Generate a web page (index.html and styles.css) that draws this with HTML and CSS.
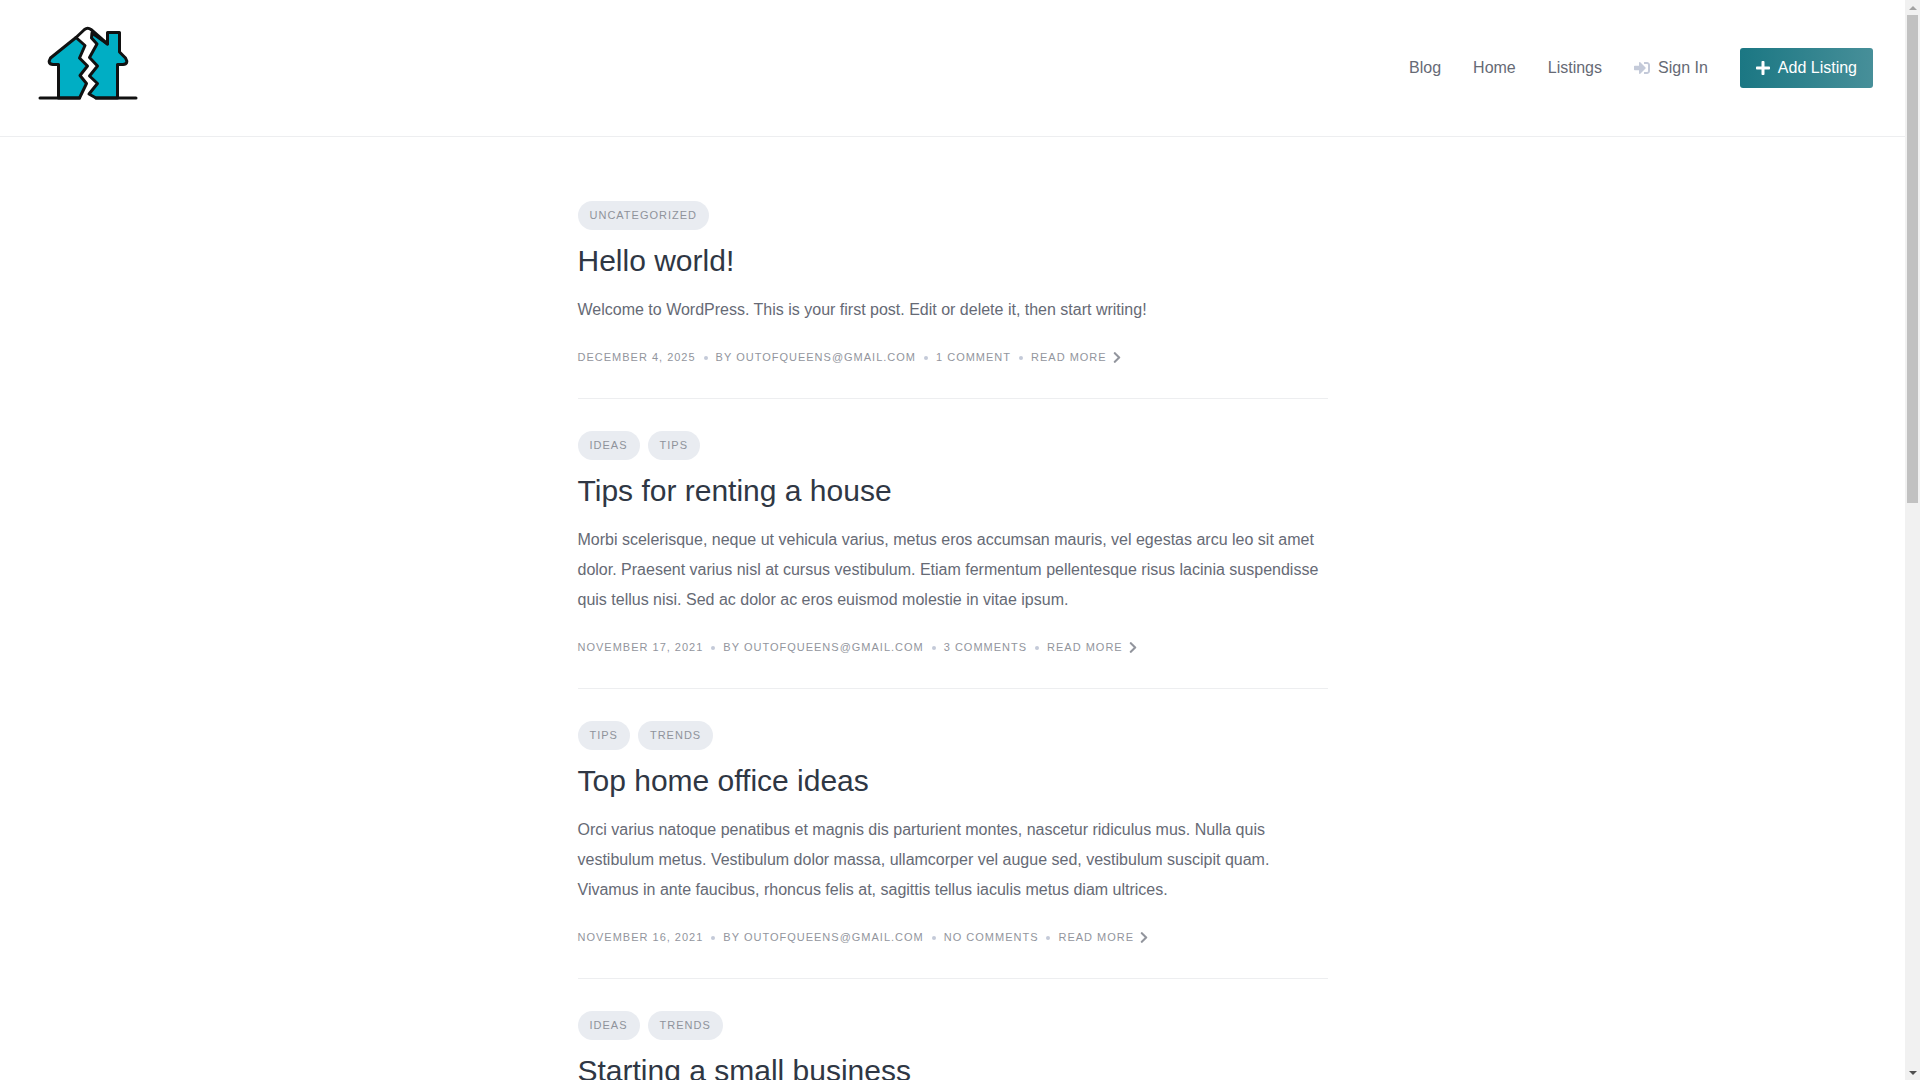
FILE: index.html
```html
<!DOCTYPE html>
<html lang="en">
<head>
<meta charset="UTF-8">
<meta name="viewport" content="width=device-width, initial-scale=1.0">
<title>Blog</title>
<link rel="stylesheet" href="styles.css">
</head>
<body>

<svg class="sprite" aria-hidden="true">
    <symbol id="chevron" viewBox="0 0 320 512"><path d="M285.476 272.971L91.132 467.314c-9.373 9.373-24.569 9.373-33.941 0l-22.667-22.667c-9.357-9.357-9.375-24.522-.04-33.901L188.505 256 34.484 101.255c-9.335-9.379-9.317-24.544.04-33.901l22.667-22.667c9.373-9.373 24.569-9.373 33.941 0L285.475 239.03c9.373 9.372 9.373 24.568.001 33.941z"/></symbol>
</svg>

<div class="site">
    <header class="site-header">
        <a href="#" class="logo" aria-label="Home page">
            <svg width="112" height="88" viewBox="0 0 112 88" fill="none" stroke="#111" stroke-width="3" stroke-linejoin="round" stroke-linecap="round">
                <path fill="#00aec4" d="M44 13.500L18.500 34Q15 40 21 40.500H26.500V74H47.500L54.500 59.500L48 51.500L55.500 42L47.500 34L53 21.500Z"/>
                <path fill="#00aec4" d="M60 9L75.500 20V8.500H87.500V28L93.500 34Q97 40 91 40.500H85.500V74H64L57 70L65.500 59.500L57.500 52L65.500 42L57.500 33.500L65 20L59.500 14Z"/>
                <path d="M44 13.500L52.500 5.500Q55.700 3 59 5.500L75.500 20"/>
                <path d="M8 74H47.500M64 74H104"/>
            </svg>
        </a>
        <nav class="menu">
            <a href="#">Blog</a>
            <a href="#">Home</a>
            <a href="#">Listings</a>
            <a href="#" class="sign-in">
                <svg class="icon" viewBox="0 0 512 512" fill="currentColor" aria-hidden="true"><path d="M416 448h-84c-6.600 0-12-5.400-12-12v-40c0-6.600 5.400-12 12-12h84c17.700 0 32-14.300 32-32V160c0-17.700-14.300-32-32-32h-84c-6.600 0-12-5.400-12-12V76c0-6.600 5.400-12 12-12h84c53 0 96 43 96 96v192c0 53-43 96-96 96zm-47-209L201 71c-15-15-41-4.500-41 17v96H24c-13.300 0-24 10.700-24 24v96c0 13.300 10.700 24 24 24h136v96c0 21.500 26 32 41 17l168-168c9.300-9.400 9.300-24.600 0-34z"/></svg>
                <span>Sign In</span>
            </a>
            <button type="button" class="btn">
                <svg class="icon-plus" viewBox="0 0 448 512" fill="currentColor" aria-hidden="true"><path d="M416 208H272V64c0-17.670-14.330-32-32-32h-32c-17.670 0-32 14.330-32 32v144H32c-17.670 0-32 14.330-32 32v32c0 17.670 14.330 32 32 32h144v144c0 17.670 14.330 32 32 32h32c17.670 0 32-14.330 32-32V304h144c17.670 0 32-14.330 32-32v-32c0-17.670-14.330-32-32-32z"/></svg>
                <span>Add Listing</span>
            </button>
        </nav>
    </header>

    <main class="content">
        <article class="post">
            <div class="tags"><a href="#">Uncategorized</a></div>
            <h2><a href="#">Hello world!</a></h2>
            <p>Welcome to WordPress. This is your first post. Edit or delete it, then start writing!</p>
            <div class="meta">
                <time datetime="2025-12-04">December 4, 2025</time>
                <span>By outofqueens@gmail.com</span>
                <a href="#">1 Comment</a>
                <a href="#" class="more">Read more <svg class="chevron"><use href="#chevron"/></svg></a>
            </div>
        </article>

        <article class="post">
            <div class="tags"><a href="#">Ideas</a><a href="#">Tips</a></div>
            <h2><a href="#">Tips for renting a house</a></h2>
            <p>Morbi scelerisque, neque ut vehicula varius, metus eros accumsan mauris, vel egestas arcu leo sit amet dolor. Praesent varius nisl at cursus vestibulum. Etiam fermentum pellentesque risus lacinia suspendisse quis tellus nisi. Sed ac dolor ac eros euismod molestie in vitae ipsum.</p>
            <div class="meta">
                <time datetime="2021-11-17">November 17, 2021</time>
                <span>By outofqueens@gmail.com</span>
                <a href="#">3 Comments</a>
                <a href="#" class="more">Read more <svg class="chevron"><use href="#chevron"/></svg></a>
            </div>
        </article>

        <article class="post">
            <div class="tags"><a href="#">Tips</a><a href="#">Trends</a></div>
            <h2><a href="#">Top home office ideas</a></h2>
            <p>Orci varius natoque penatibus et magnis dis parturient montes, nascetur ridiculus mus. Nulla quis vestibulum metus. Vestibulum dolor massa, ullamcorper vel augue sed, vestibulum suscipit quam. Vivamus in ante faucibus, rhoncus felis at, sagittis tellus iaculis metus diam ultrices.</p>
            <div class="meta">
                <time datetime="2021-11-16">November 16, 2021</time>
                <span>By outofqueens@gmail.com</span>
                <a href="#">No Comments</a>
                <a href="#" class="more">Read more <svg class="chevron"><use href="#chevron"/></svg></a>
            </div>
        </article>

        <article class="post">
            <div class="tags"><a href="#">Ideas</a><a href="#">Trends</a></div>
            <h2><a href="#">Starting a small business</a></h2>
        </article>
    </main>
</div>

<div class="scrollbar" aria-hidden="true">
    <span class="arrow arrow-up"></span>
    <div class="track"><div class="thumb"></div></div>
    <span class="arrow arrow-down"></span>
</div>

</body>
</html>
```
FILE: styles.css
```css
* {
    box-sizing: border-box;
}

body {
    display: flex;
    height: 100vh;
    margin: 0;
    overflow: hidden;
    background-color: #fff;
    color: #666a75;
    font-family: "Liberation Sans", Arial, sans-serif;
    font-size: 16px;
    line-height: 30px;
}

a {
    color: inherit;
    text-decoration: none;
}

.sprite {
    display: none;
}

.site {
    flex: 1;
    min-width: 0;
    overflow: hidden;
}

/* Header */
.site-header {
    display: flex;
    align-items: center;
    justify-content: space-between;
    padding: 24px 32px;
    border-bottom: 1px solid #edeef0;
}

.logo svg {
    display: block;
}

.menu {
    display: flex;
    align-items: center;
    gap: 32px;
}

.sign-in {
    display: flex;
    align-items: center;
    gap: 8px;
}

.icon {
    width: 16px;
    height: 16px;
    color: #c4cad9;
}

.btn {
    display: flex;
    align-items: center;
    gap: 8px;
    height: 40px;
    padding: 0 16px;
    border: none;
    border-radius: 3px;
    background-image: linear-gradient(to right, #1b7783, #478f99);
    color: #fff;
    font: inherit;
    cursor: pointer;
}

.icon-plus {
    width: 14px;
    height: 16px;
}

/* Posts */
.content {
    max-width: 750px;
    margin: 0 auto;
    padding-top: 64px;
}

.post {
    margin-bottom: 32px;
    padding-bottom: 32px;
    border-bottom: 1px solid #edeef0;
}

.tags {
    display: flex;
    gap: 8px;
    margin-bottom: 12px;
}

.tags a {
    padding: 0 12px;
    border-radius: 15px;
    background-color: #e9ecf1;
    color: #8f939b;
    font-size: 11px;
    line-height: 29px;
    letter-spacing: 1px;
    text-transform: uppercase;
}

.post h2 {
    margin: 0 0 16px;
    color: #2f3744;
    font-size: 30px;
    font-weight: normal;
    line-height: 37px;
}

.post p {
    margin: 0 0 24px;
}

.meta {
    display: flex;
    align-items: center;
    color: #92959d;
    font-size: 11px;
    line-height: 17px;
    letter-spacing: 1px;
    text-transform: uppercase;
}

.meta > * + *::before {
    content: "";
    display: inline-block;
    width: 4px;
    height: 4px;
    margin: 0 8px;
    border-radius: 50%;
    background-color: #c4cad9;
    vertical-align: middle;
}

.more {
    display: flex;
    align-items: center;
}

.chevron {
    width: 8px;
    height: 13px;
    margin-left: 6px;
    fill: currentColor;
}

/* Scrollbar */
.scrollbar {
    display: flex;
    flex-direction: column;
    align-items: center;
    width: 15px;
    background-color: #f1f1f1;
}

.arrow {
    width: 0;
    height: 0;
    margin: 6px 0 5px;
    border: 4px solid transparent;
}

.arrow-up {
    border-top: none;
    border-bottom-color: #a3a3a3;
}

.arrow-down {
    border-bottom: none;
    border-top-color: #505050;
}

.track {
    flex: 1;
    width: 11px;
}

.thumb {
    height: 46.5%;
    background-color: #c1c1c1;
}
```
